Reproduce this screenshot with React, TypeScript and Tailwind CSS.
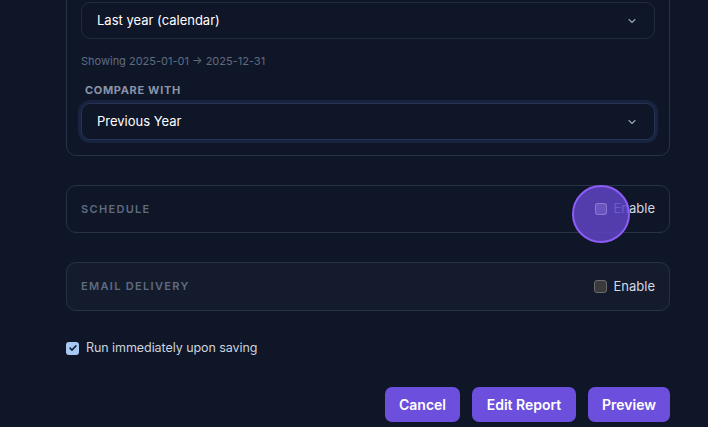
import React from "react";

function Chevron() {
  return (
    <svg width="12" height="12" viewBox="0 0 24 24" fill="none" stroke="#94a3b8" strokeWidth="2.2" strokeLinecap="round" strokeLinejoin="round">
      <path d="m6 9 6 6 6-6" />
    </svg>
  );
}

function Select({ label, focused }: { label: string; focused?: boolean }) {
  return (
    <div
      className={
        "flex h-[37px] items-center justify-between rounded-[9px] border bg-[#0f1628] pl-[15px] pr-[16px] " +
        (focused ? "border-[#263352] ring-[3px] ring-[#17233f]" : "border-[#222b3d]")
      }
    >
      <span className="text-[13px] text-white">{label}</span>
      <Chevron />
    </div>
  );
}

export default function App() {
  return (
    <div
      className="h-[427px] w-[708px] overflow-hidden bg-[#0f1628] pl-[66px]"
      style={{ fontFamily: "Inter, 'Noto Sans', sans-serif" }}
    >
      <div className="w-[604px]">
        <div className="-mt-[14px] rounded-[10px] border border-[#283246] bg-[#0f1628] px-[14px] pt-[15px] pb-[15px]">
          <Select label="Last year (calendar)" />
          <div className="mt-[15px] text-[11px] leading-[14px] text-[#5f6b80]">
            Showing 2025-01-01 → 2025-12-31
          </div>
          <div className="mt-[15px] pl-[4px] text-[11px] font-bold uppercase leading-[14px] tracking-[0.06em] text-[#8a94a8]">
            Compare with
          </div>
          <div className="mt-[6px]">
            <Select label="Previous Year" focused />
          </div>
        </div>

        <div className="relative mt-[29px] flex h-[48px] items-center justify-between rounded-[10px] border border-[#283246] bg-[#0f1628] pl-[14px] pr-[14px]">
          <span className="text-[11px] font-semibold uppercase tracking-[0.12em] text-[#5f6b80]">Schedule</span>
          <label className="flex items-center gap-[7px]">
            <span className="h-[12px] w-[12px] rounded-[3px] border border-[#5b5f73] bg-[#1a1f2e]" />
            <span className="text-[13px] text-[#d4d8e2]">Enable</span>
          </label>
          <div className="pointer-events-none absolute left-[505px] top-[-1px] h-[58px] w-[58px] rounded-full border-2 border-[#8b5cf6] bg-[#5f44c4]/85" />
          <div className="pointer-events-none absolute left-[528px] top-[17px] h-[12px] w-[12px] rounded-[3px] border border-[#9a86d9]/70 bg-[#7a64c9]/60" />
        </div>

        <div className="mt-[29px] flex h-[49px] items-center justify-between rounded-[10px] border border-[#283246] bg-[#141b2d] pl-[14px] pr-[14px]">
          <span className="text-[11px] font-semibold uppercase tracking-[0.12em] text-[#5f6b80]">Email delivery</span>
          <label className="flex items-center gap-[7px]">
            <span className="h-[13px] w-[13px] rounded-[3px] border border-[#6b6b6b] bg-[#3a3a3a]" />
            <span className="text-[13px] text-[#d4d8e2]">Enable</span>
          </label>
        </div>

        <div className="mt-[28px] flex items-center gap-[7px]">
          <span className="flex h-[13px] w-[13px] items-center justify-center rounded-[3px] bg-[#a9c9f5]">
            <svg width="10" height="10" viewBox="0 0 24 24" fill="none" stroke="#1e293b" strokeWidth="4" strokeLinecap="round" strokeLinejoin="round">
              <path d="M5 12.5l4.5 4.5L19 7" />
            </svg>
          </span>
          <span className="text-[12.5px] tracking-[-0.005em] text-[#cdd3de]">Run immediately upon saving</span>
        </div>

        <div className="mt-[29px] flex justify-end gap-[12px]">
          <button className="h-[35px] w-[75px] rounded-[7px] bg-[#6c4fdd] text-[14px] font-semibold text-white">Cancel</button>
          <button className="h-[35px] w-[104px] rounded-[7px] bg-[#6c4fdd] text-[14px] font-semibold text-white">Edit Report</button>
          <button className="h-[35px] w-[82px] rounded-[7px] bg-[#6c4fdd] text-[14px] font-semibold text-white">Preview</button>
        </div>
      </div>
    </div>
  );
}
